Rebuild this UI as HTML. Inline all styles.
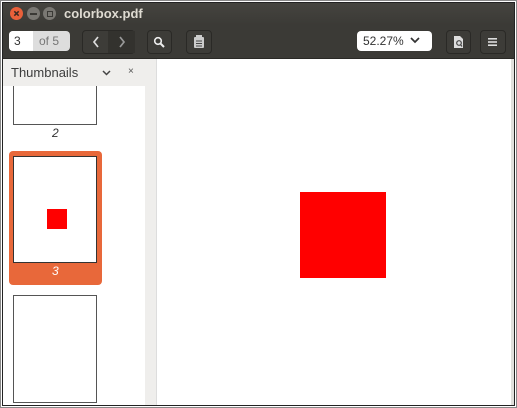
<!DOCTYPE html>
<html><head><style>
*{margin:0;padding:0;box-sizing:border-box}
body{width:517px;height:408px;background:#fff;font-family:"Liberation Sans",sans-serif;position:relative;overflow:hidden}
.a{position:absolute}
.btn{position:absolute;border:1px solid #2a2926;border-radius:4px;background:#3d3c38}
</style></head><body>
<div class="a" style="left:0;top:0;width:517px;height:408px;border:1px solid #888"></div>
<div class="a" style="left:2px;top:2px;width:513px;height:404px;border:1px solid #222;background:#fff"></div>
<!-- title bar -->
<div class="a" style="left:3px;top:3px;width:511px;height:22px;background:linear-gradient(#45443f,#3b3a36)"></div>
<div class="a" style="left:10px;top:7px;width:13px;height:13px;border-radius:50%;background:#e9603a"></div>
<svg class="a" style="left:10px;top:7px" width="13" height="13"><path d="M4.3 4.3L8.7 8.7M8.7 4.3L4.3 8.7" stroke="#3a2a22" stroke-width="1.5"/></svg>
<div class="a" style="left:27px;top:7px;width:13px;height:13px;border-radius:50%;background:#7a7873"></div>
<div class="a" style="left:30px;top:13px;width:7px;height:1.5px;background:#3a3935"></div>
<div class="a" style="left:43px;top:7px;width:13px;height:13px;border-radius:50%;background:#7a7873"></div>
<div class="a" style="left:46.5px;top:10.5px;width:6px;height:6px;border:1.3px solid #3a3935"></div>
<div class="a" style="left:64px;top:6px;color:#dfdbd2;font-size:13px;font-weight:bold">colorbox.pdf</div>
<!-- toolbar -->
<div class="a" style="left:3px;top:25px;width:511px;height:34px;background:#3b3a36;border-bottom:1px solid #2a2926"></div>
<div class="a" style="left:9px;top:31px;width:61px;height:20px;border-radius:4px;background:#ddd;overflow:hidden">
 <div class="a" style="left:0;top:0;width:24px;height:20px;background:#fff"></div>
 <div class="a" style="left:5px;top:3px;font-size:12px;color:#333">3</div>
 <div class="a" style="left:30px;top:3px;font-size:12px;color:#777">of 5</div>
</div>
<div class="btn" style="left:82px;top:30px;width:53px;height:24px"><div class="a" style="left:25px;top:0;width:27px;height:22px;background:#33322e"></div></div>
<svg class="a" style="left:91px;top:35px" width="10" height="14"><path d="M7 2L3 7L7 12" stroke="#ddd" stroke-width="1.7" fill="none"/></svg>
<svg class="a" style="left:117px;top:35px" width="10" height="14"><path d="M3 2L7 7L3 12" stroke="#999" stroke-width="1.7" fill="none"/></svg>
<div class="btn" style="left:147px;top:30px;width:25px;height:24px"></div>
<svg class="a" style="left:153px;top:36px" width="13" height="13"><circle cx="5" cy="5" r="3.3" stroke="#eee" stroke-width="1.6" fill="none"/><line x1="7.5" y1="7.5" x2="11" y2="11" stroke="#eee" stroke-width="2"/></svg>
<div class="btn" style="left:186px;top:30px;width:26px;height:24px"></div>
<svg class="a" style="left:193px;top:35px" width="12" height="14"><rect x="1" y="2" width="10" height="11" fill="#ccc" rx="1"/><rect x="3" y="0" width="6" height="3" fill="#ccc"/><line x1="3" y1="6" x2="9" y2="6" stroke="#444"/><line x1="3" y1="8.5" x2="9" y2="8.5" stroke="#444"/><line x1="3" y1="11" x2="9" y2="11" stroke="#444"/></svg>
<div class="a" style="left:357px;top:31px;width:75px;height:20px;border-radius:4px;background:#fff"></div>
<div class="a" style="left:363px;top:34px;font-size:12px;color:#333">52.27%</div>
<svg class="a" style="left:410px;top:37px" width="10" height="7"><path d="M1 1L5 5L9 1" stroke="#333" stroke-width="1.7" fill="none"/></svg>
<div class="btn" style="left:446px;top:30px;width:25px;height:24px"></div>
<svg class="a" style="left:453px;top:35px" width="12" height="14"><path d="M1 1H7L10 4V13H1Z" fill="#ddd"/><circle cx="6" cy="8" r="2.3" stroke="#444" stroke-width="1.2" fill="none"/><line x1="7.5" y1="9.5" x2="9" y2="11.5" stroke="#444" stroke-width="1.2"/></svg>
<div class="btn" style="left:480px;top:30px;width:26px;height:24px"></div>
<svg class="a" style="left:488px;top:37px" width="10" height="10"><rect y="1" width="9" height="1.6" fill="#ddd"/><rect y="4.2" width="9" height="1.6" fill="#ddd"/><rect y="7.4" width="9" height="1.6" fill="#ddd"/></svg>
<!-- sidebar -->
<div class="a" style="left:3px;top:59px;width:154px;height:346px;background:#efeeec;border-right:1px solid #ddd"></div>
<div class="a" style="left:11px;top:65px;font-size:13px;color:#3c3c3c">Thumbnails</div>
<svg class="a" style="left:102px;top:70px" width="9" height="6"><path d="M1 1L4.5 4.5L8 1" stroke="#444" stroke-width="1.5" fill="none"/></svg>
<div class="a" style="left:128px;top:66px;font-size:10px;color:#555">×</div>
<div class="a" style="left:3px;top:86px;width:142px;height:319px;background:#fff"></div>
<div class="a" style="left:13px;top:86px;width:84px;height:39px;border:1px solid #555;border-top:none"></div>
<div class="a" style="left:52px;top:126px;font-size:12px;font-style:italic;color:#333">2</div>
<div class="a" style="left:9px;top:151px;width:93px;height:134px;border-radius:4px;background:#e8683a"></div>
<div class="a" style="left:13px;top:156px;width:84px;height:107px;border:1px solid #333;background:#fff"></div>
<div class="a" style="left:47px;top:209px;width:20px;height:20px;background:#f00"></div>
<div class="a" style="left:52px;top:264px;font-size:12px;font-style:italic;color:#fff">3</div>
<div class="a" style="left:13px;top:295px;width:84px;height:108px;border:1px solid #555;background:#fff"></div>
<!-- main -->
<div class="a" style="left:300px;top:192px;width:86px;height:86px;background:#f00"></div>
<div class="a" style="left:511px;top:59px;width:3px;height:346px;background:#e0dfdc"></div>
</body></html>
